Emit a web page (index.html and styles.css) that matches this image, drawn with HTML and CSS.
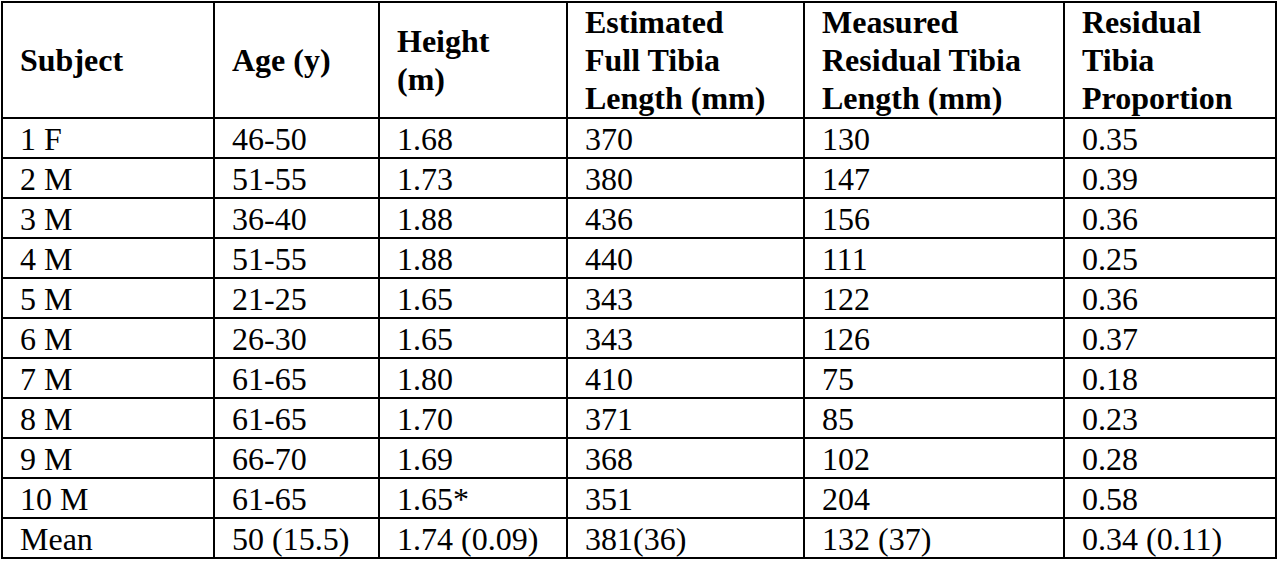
FILE: index.html
```html
<!DOCTYPE html>
<html lang="en">
<head>
<meta charset="utf-8">
<title>Residual Tibia Table</title>
<link rel="stylesheet" href="styles.css">
</head>
<body>
<table class="data">
  <colgroup>
    <col class="c1"><col class="c2"><col class="c3"><col class="c4"><col class="c5"><col class="c6">
  </colgroup>
  <thead>
    <tr>
      <th>Subject</th>
      <th>Age (y)</th>
      <th>Height (m)</th>
      <th>Estimated Full Tibia Length (mm)</th>
      <th>Measured Residual Tibia Length (mm)</th>
      <th>Residual Tibia Proportion</th>
    </tr>
  </thead>
  <tbody>
    <tr><td>1 F</td><td>46-50</td><td>1.68</td><td>370</td><td>130</td><td>0.35</td></tr>
    <tr><td>2 M</td><td>51-55</td><td>1.73</td><td>380</td><td>147</td><td>0.39</td></tr>
    <tr><td>3 M</td><td>36-40</td><td>1.88</td><td>436</td><td>156</td><td>0.36</td></tr>
    <tr><td>4 M</td><td>51-55</td><td>1.88</td><td>440</td><td>111</td><td>0.25</td></tr>
    <tr><td>5 M</td><td>21-25</td><td>1.65</td><td>343</td><td>122</td><td>0.36</td></tr>
    <tr><td>6 M</td><td>26-30</td><td>1.65</td><td>343</td><td>126</td><td>0.37</td></tr>
    <tr><td>7 M</td><td>61-65</td><td>1.80</td><td>410</td><td>75</td><td>0.18</td></tr>
    <tr><td>8 M</td><td>61-65</td><td>1.70</td><td>371</td><td>85</td><td>0.23</td></tr>
    <tr><td>9 M</td><td>66-70</td><td>1.69</td><td>368</td><td>102</td><td>0.28</td></tr>
    <tr><td>10 M</td><td>61-65</td><td>1.65*</td><td>351</td><td>204</td><td>0.58</td></tr>
    <tr><td>Mean</td><td>50 (15.5)</td><td>1.74 (0.09)</td><td>381(36)</td><td>132 (37)</td><td>0.34 (0.11)</td></tr>
  </tbody>
</table>
</body>
</html>
```
FILE: styles.css
```css
html, body {
  margin: 0;
  padding: 0;
  background: #ffffff;
}

body {
  padding: 1px 0 0 1px;
  font-family: "Liberation Serif", "Times New Roman", serif;
  font-size: 32px;
  color: #000000;
}

.data {
  border-collapse: collapse;
  table-layout: fixed;
  width: 1276px;
}

.c1 { width: 212px; }
.c2 { width: 165px; }
.c3 { width: 188px; }
.c4 { width: 237px; }
.c5 { width: 260px; }
.c6 { width: 212px; }

.data th,
.data td {
  border: 2px solid #000000;
  text-align: left;
  padding: 0 24px 0 17px;
}

.data th {
  font-weight: bold;
  line-height: 38px;
  height: 114px;
  vertical-align: middle;
}

.data td {
  font-weight: normal;
  line-height: 36px;
  height: 36px;
  padding-top: 2px;
  vertical-align: top;
  white-space: nowrap;
}
```
